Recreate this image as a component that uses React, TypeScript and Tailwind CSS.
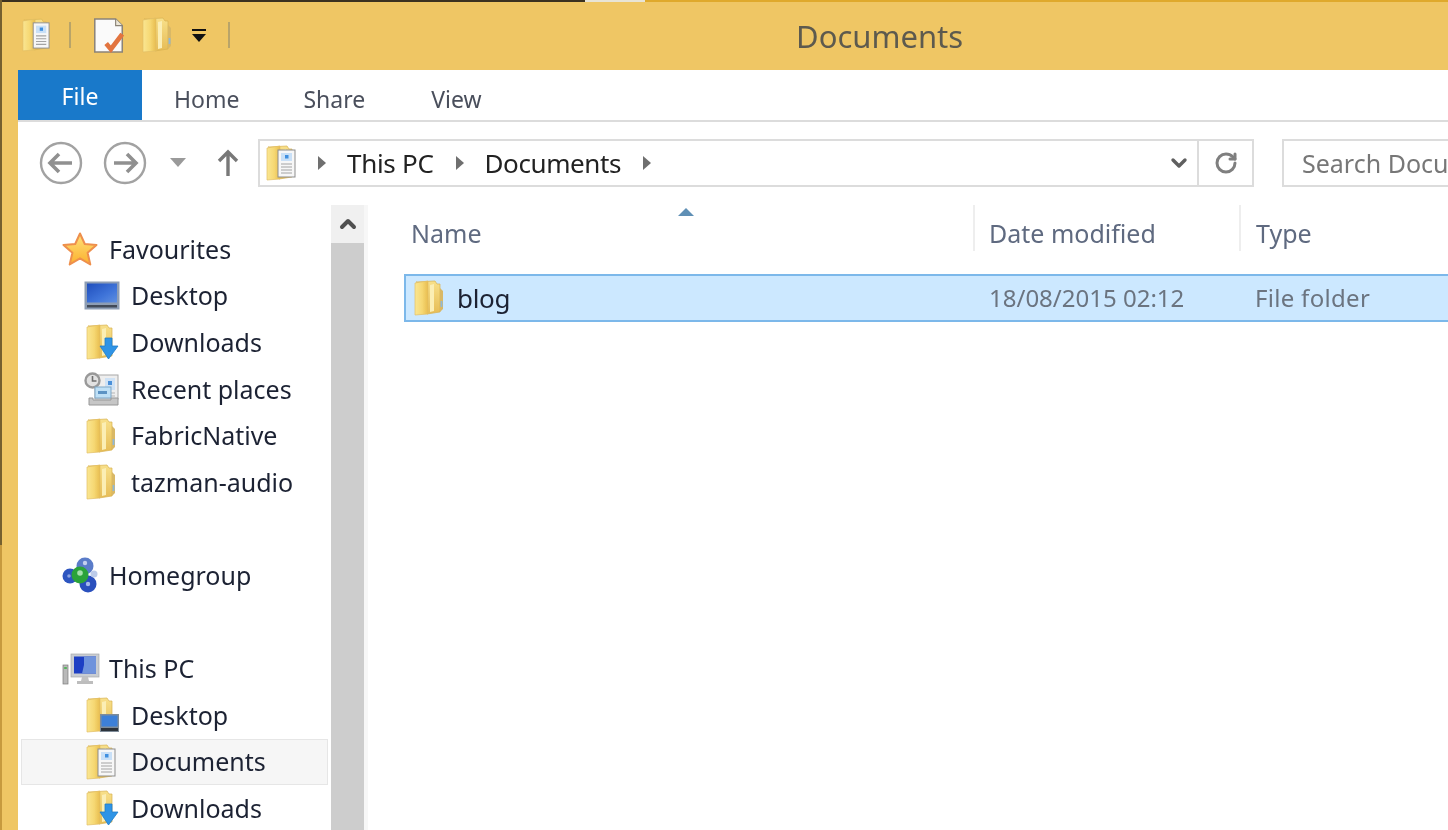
import { ChevronUp, ChevronDown, RotateCw } from 'lucide-react';

type IconKind = 'folder' | 'docs' | 'downloads' | 'desktopFolder' | 'desktop' | 'recent';

function FolderBase() {
  return (
    <>
      <defs>
        <linearGradient id="fold-front" x1="0" y1="0" x2="1" y2="0">
          <stop offset="0" stopColor="#fae692" />
          <stop offset="0.55" stopColor="#f6d873" />
          <stop offset="1" stopColor="#e8bd4f" />
        </linearGradient>
        <linearGradient id="fold-back" x1="0" y1="0" x2="0" y2="1">
          <stop offset="0" stopColor="#f8e08a" />
          <stop offset="1" stopColor="#e6bc55" />
        </linearGradient>
      </defs>
      <path d="M2 2 L21 1 L23 4 L26 4 L26 32 L13 34 L13 6 Z" fill="url(#fold-back)" stroke="#d9b250" strokeWidth="0.7" />
      <path d="M16 5 L20 4 L20 31 L16 32 Z" fill="#fbeeb4" />
      <path d="M1 3 L14 1 L14 34 L1 35 Z" fill="url(#fold-front)" stroke="#e2bf66" strokeWidth="0.7" />
    </>
  );
}

function Folder({ className = 'ml-[2px] w-[30px] h-[36px]' }: { className?: string }) {
  return (
    <svg viewBox="0 0 30 36" className={className}>
      <FolderBase />
      <path d="M26 8 L29 11 L29 29 L26 32 Z" fill="#d9b866" />
      <rect x="26.6" y="21" width="1.8" height="6" fill="#8fb8d6" />
    </svg>
  );
}

function DocsFolder({ className = 'ml-[2px] w-[30px] h-[36px]' }: { className?: string }) {
  return (
    <svg viewBox="0 0 30 36" className={className}>
      <FolderBase />
      <rect x="12" y="5" width="17" height="27" fill="#f7f7f7" stroke="#8d8d8d" strokeWidth="1" />
      <rect x="15" y="8" width="11" height="8" fill="#c9e0f7" />
      <rect x="19" y="10" width="3.5" height="3.5" fill="#3f8fe0" />
      <path d="M15 19h11M15 22h11M15 25h11M15 28h11" stroke="#a3a3a3" strokeWidth="1.2" />
    </svg>
  );
}

function DownloadsFolder() {
  return (
    <svg viewBox="0 0 34 36" className="ml-[2px] h-[36px] w-[34px]">
      <FolderBase />
      <path d="M19 14 H26 V22 H32 L22.5 35 L14 22 H19 Z" fill="#2f94e6" stroke="#1f7cc9" strokeWidth="0.8" />
    </svg>
  );
}

function DesktopFolder() {
  return (
    <svg viewBox="0 0 34 36" className="ml-[2px] h-[36px] w-[34px]">
      <FolderBase />
      <rect x="14" y="17" width="19" height="18" fill="#7f8c99" />
      <rect x="15.5" y="18.5" width="16" height="11" fill="#3d80d8" />
      <rect x="15" y="31" width="17" height="3" fill="#2c333b" />
    </svg>
  );
}

function Monitor() {
  return (
    <svg viewBox="0 0 36 30" className="h-[30px] w-[36px]">
      <defs>
        <linearGradient id="screen-blue" x1="0" y1="0" x2="1" y2="1">
          <stop offset="0" stopColor="#1f4ebd" />
          <stop offset="0.6" stopColor="#3f74d9" />
          <stop offset="1" stopColor="#5f8fe0" />
        </linearGradient>
      </defs>
      <rect x="0.5" y="0.5" width="35" height="28" fill="#8d9db4" />
      <rect x="3" y="2.5" width="30" height="19" fill="url(#screen-blue)" />
      <rect x="3" y="24" width="30" height="2.5" fill="#414a58" />
    </svg>
  );
}

function RecentIcon() {
  return (
    <svg viewBox="0 0 36 34" className="h-[34px] w-[36px]">
      <rect x="11" y="3" width="23" height="24" fill="#eeeeee" stroke="#a8a8a8" />
      <rect x="21" y="6" width="10" height="12" fill="#cfe2f5" />
      <rect x="24" y="9" width="4" height="4" fill="#4a90d9" />
      <path d="M20 21h11M20 24h11" stroke="#b5b5b5" />
      <circle cx="8.5" cy="8.5" r="7" fill="#e2e2e2" stroke="#999999" strokeWidth="2.4" />
      <path d="M8.5 4v5h4" stroke="#6f6f6f" strokeWidth="1.6" fill="none" />
      <rect x="11" y="15" width="16" height="11" fill="#bfe0f6" stroke="#7fa7c7" />
      <rect x="14" y="19" width="9" height="3" fill="#5c93c4" />
      <path d="M5 26 H9 V28 H27 V26 H34 V33 H5 Z" fill="#c6c6c6" stroke="#989898" />
    </svg>
  );
}

function SidebarIcon({ kind }: { kind: IconKind }) {
  if (kind === 'folder') return <Folder />;
  if (kind === 'docs') return <DocsFolder />;
  if (kind === 'downloads') return <DownloadsFolder />;
  if (kind === 'desktopFolder') return <DesktopFolder />;
  if (kind === 'desktop') return <Monitor />;
  return <RecentIcon />;
}

function Star() {
  return (
    <svg viewBox="0 0 36 34" className="h-[34px] w-[36px]">
      <defs>
        <linearGradient id="star-fill" x1="0" y1="0" x2="0" y2="1">
          <stop offset="0" stopColor="#ffe27a" />
          <stop offset="1" stopColor="#fbb02d" />
        </linearGradient>
      </defs>
      <path d="M18 1.5 L22.8 12 L34.5 13 L25.6 20.8 L28.3 32.5 L18 26.3 L7.7 32.5 L10.4 20.8 L1.5 13 L13.2 12 Z" fill="url(#star-fill)" stroke="#ee8f4c" strokeWidth="2" strokeLinejoin="round" />
    </svg>
  );
}

function HomegroupIcon() {
  return (
    <svg viewBox="0 0 36 36" className="h-[36px] w-[36px]">
      <circle cx="23" cy="9" r="8.5" fill="#5a7cc9" />
      <circle cx="8" cy="19" r="7.5" fill="#2d55c0" />
      <circle cx="26" cy="27" r="8.5" fill="#2a50bd" />
      <circle cx="32" cy="17" r="3.5" fill="#bccbe9" />
      <circle cx="18" cy="18" r="8.5" fill="#2ba33a" />
      <circle cx="18" cy="16" r="2.8" fill="#a6e0ac" />
      <circle cx="26" cy="27" r="2.2" fill="#a5b9ea" />
      <circle cx="23" cy="6" r="2.2" fill="#c3d0ee" />
      <circle cx="7" cy="19" r="1.8" fill="#8aa3e2" />
    </svg>
  );
}

function PcIcon() {
  return (
    <svg viewBox="0 0 38 32" className="h-[32px] w-[38px]">
      <rect x="1" y="12" width="5" height="19" fill="#b9b9b9" stroke="#7c7c7c" strokeWidth="0.7" />
      <rect x="2.2" y="14" width="2.6" height="2" fill="#55b35c" />
      <rect x="9" y="1" width="28" height="23" fill="#c9cdd2" stroke="#a6a9ad" strokeWidth="0.7" />
      <rect x="12" y="3.5" width="22" height="17" fill="#1d3fc4" />
      <path d="M22 3.5 H34 V20.5 H20 L22 12 Z" fill="#6f93dc" />
      <path d="M20 24h6l1 4h-8z" fill="#c2c2c2" />
      <rect x="15" y="28" width="16" height="3" fill="#bdbdbd" />
    </svg>
  );
}

function TreeRow({ label, kind, selected }: { label: string; kind: IconKind; selected?: boolean }) {
  return (
    <div
      className={`flex h-[46.6px] items-center ${selected ? 'ml-[3px] mr-[3px] border border-[#e6e6e6] bg-[#f6f6f6] pl-[62px]' : 'pl-[66px]'}`}
    >
      <div className="flex w-[47px] shrink-0 items-center">
        <SidebarIcon kind={kind} />
      </div>
      <span className="text-[25px] leading-none text-[#1c2233]">{label}</span>
    </div>
  );
}

function TreeHead({ label, icon }: { label: string; icon: React.ReactNode }) {
  return (
    <div className="flex h-[46.6px] items-center pl-[44px]">
      <div className="flex w-[47px] shrink-0 items-center">{icon}</div>
      <span className="text-[25px] leading-none text-[#1c2233]">{label}</span>
    </div>
  );
}

function Caret() {
  return (
    <svg viewBox="0 0 10 16" className="h-[16px] w-[10px]">
      <path d="M1 1 L9 8 L1 15 Z" fill="#6f6f6f" />
    </svg>
  );
}

function NavCircle({ dir }: { dir: 'left' | 'right' }) {
  return (
    <svg viewBox="0 0 44 44" className="h-[44px] w-[44px] shrink-0">
      <circle cx="22" cy="22" r="20" fill="none" stroke="#a2a2a2" strokeWidth="2.4" />
      {dir === 'left' ? (
        <path d="M33 22 H12 M20 13 L11 22 L20 31" fill="none" stroke="#909090" strokeWidth="3.6" />
      ) : (
        <path d="M11 22 H32 M24 13 L33 22 L24 31" fill="none" stroke="#909090" strokeWidth="3.6" />
      )}
    </svg>
  );
}

export default function App() {
  return (
    <div className="flex h-[830px] w-[1448px] overflow-hidden bg-[#efc664] font-['Noto_Sans',sans-serif] blur-[0.6px]">
      {/* Left edge of the window */}
      <div className="flex w-[2px] shrink-0 flex-col">
        <div className="h-[545px] bg-[#75602f]" />
        <div className="flex-1 bg-[#c79a3e]" />
      </div>

      <div className="flex min-w-0 flex-1 flex-col">
        {/* Top edge */}
        <div className="flex h-[2px] shrink-0">
          <div className="w-[583px] bg-[#3b3120]" />
          <div className="w-[60px] bg-[#e8e4d6]" />
          <div className="flex-1 bg-[#dfa92c]" />
        </div>

        {/* Title bar */}
        <div className="flex h-[68px] shrink-0 items-center pb-[3px]">
          <div className="ml-[20px] flex w-[28px] justify-center">
            <DocsFolder className="h-[34px] w-[30px]" />
          </div>
          <div className="ml-[19px] h-[26px] w-[2px] bg-[#b9a469]" />
          <svg viewBox="0 0 32 38" className="ml-[22px] mt-[2px] h-[36px] w-[32px]">
            <path d="M1 1 H23 L30 8 V36 H1 Z" fill="#fafafa" stroke="#8a8378" strokeWidth="1.6" />
            <path d="M23 1 V8 H30" fill="#ece7d8" stroke="#8a8378" strokeWidth="1.2" />
            <path d="M13 27 L18 33 L30 17" fill="none" stroke="#e2743f" strokeWidth="5" />
          </svg>
          <div className="ml-[17px]">
            <Folder className="h-[36px] w-[30px]" />
          </div>
          <svg viewBox="0 0 16 14" className="ml-[19px] mt-[2px] h-[14px] w-[16px]">
            <rect x="1" y="0" width="14" height="2" fill="#111111" />
            <path d="M1 5 H15 L8 13 Z" fill="#111111" />
          </svg>
          <div className="ml-[21px] h-[26px] w-[2px] bg-[#b9a469]" />
          <div className="ml-[566px] mt-[3px] text-[31px] leading-none text-[#5d5a4e]">Documents</div>
        </div>

        {/* Window body */}
        <div className="ml-[16px] flex min-h-0 flex-1 flex-col bg-white">
          {/* Tabs */}
          <div className="flex h-[52px] shrink-0 border-b-2 border-[#dcdcdc] text-[23px] text-[#4a4f5c]">
            <div className="flex h-[50px] w-[124px] items-center justify-center bg-[#1979ca] pt-[3px] text-white">File</div>
            <div className="ml-[32px] flex items-center pt-[8px]">Home</div>
            <div className="ml-[64px] flex items-center pt-[8px]">Share</div>
            <div className="ml-[66px] flex items-center pt-[8px]">View</div>
          </div>

          {/* Address toolbar */}
          <div className="flex h-[83px] shrink-0 items-start pt-[17px]">
            <div className="ml-[21px] mt-[2px] flex items-center">
              <NavCircle dir="left" />
              <div className="ml-[20px]">
                <NavCircle dir="right" />
              </div>
              <svg viewBox="0 0 16 10" className="ml-[23px] h-[10px] w-[16px]">
                <path d="M0 0 H16 L8 9 Z" fill="#9a9a9a" />
              </svg>
              <svg viewBox="0 0 22 28" className="ml-[31px] h-[28px] w-[22px]">
                <path d="M11 27 V3 M2 12 L11 3 L20 12" fill="none" stroke="#787878" strokeWidth="3.4" />
              </svg>
            </div>
            <div className="ml-[19px] flex h-[48px] w-[996px] shrink-0 items-center border-2 border-[#dcdcdc]">
              <div className="ml-[6px]">
                <DocsFolder className="h-[36px] w-[30px]" />
              </div>
              <div className="ml-[21px]">
                <Caret />
              </div>
              <span className="ml-[20px] text-[26px] leading-none tracking-[-0.3px] text-[#222222]">This PC</span>
              <div className="ml-[21px]">
                <Caret />
              </div>
              <span className="ml-[20px] text-[26px] leading-none tracking-[-0.4px] text-[#222222]">Documents</span>
              <div className="ml-[21px]">
                <Caret />
              </div>
              <div className="flex-1" />
              <ChevronDown className="mr-[6px] h-[24px] w-[24px] text-[#5f5f5f]" strokeWidth={3.4} />
              <div className="flex h-full w-[55px] items-center justify-center border-l-2 border-[#dcdcdc]">
                <RotateCw className="h-[24px] w-[24px] text-[#7f7f7f]" strokeWidth={3} />
              </div>
            </div>
            <div className="ml-[28px] flex h-[48px] w-[300px] shrink-0 items-center border-2 border-[#dcdcdc] pl-[18px] text-[25px] leading-none whitespace-nowrap text-[#777777]">
              Search Documents
            </div>
          </div>

          <div className="flex min-h-0 flex-1">
            {/* Navigation pane */}
            <div className="w-[313px] shrink-0 pt-[21px]">
              <TreeHead label="Favourites" icon={<Star />} />
              <TreeRow label="Desktop" kind="desktop" />
              <TreeRow label="Downloads" kind="downloads" />
              <TreeRow label="Recent places" kind="recent" />
              <TreeRow label="FabricNative" kind="folder" />
              <TreeRow label="tazman-audio" kind="folder" />
              <div className="h-[46.6px]" />
              <TreeHead label="Homegroup" icon={<HomegroupIcon />} />
              <div className="h-[46.6px]" />
              <TreeHead label="This PC" icon={<PcIcon />} />
              <TreeRow label="Desktop" kind="desktopFolder" />
              <TreeRow label="Documents" kind="docs" selected />
              <TreeRow label="Downloads" kind="downloads" />
            </div>

            {/* Scrollbar */}
            <div className="flex w-[33px] shrink-0 flex-col bg-[#cdcdcd]">
              <div className="flex h-[38px] items-center justify-center bg-[#f0f0f0]">
                <ChevronUp className="h-[24px] w-[24px] text-[#505050]" strokeWidth={4} />
              </div>
            </div>

            {/* File list */}
            <div className="relative min-w-0 flex-1 border-l-4 border-[#f7f7f7]">
              <svg viewBox="0 0 16 8" className="absolute left-[310px] top-[3px] h-[8px] w-[16px]">
                <path d="M0 8 L8 0 L16 8 Z" fill="#5f8fb5" />
              </svg>
              <div className="flex h-[69px] text-[25px] text-[#5f6a80]">
                <div className="flex h-[46px] w-[607px] shrink-0 items-center border-r-2 border-[#eeeeee] pl-[43px] pt-[12px]">Name</div>
                <div className="flex h-[46px] w-[266px] shrink-0 items-center border-r-2 border-[#eeeeee] pl-[14px] pt-[12px]">Date modified</div>
                <div className="flex h-[46px] items-center pl-[15px] pt-[12px]">Type</div>
              </div>
              <div className="ml-[36px] flex h-[48px] items-center border-2 border-r-0 border-[#7cb8ea] bg-[#cce8ff]">
                <div className="ml-[8px] flex w-[43px] shrink-0">
                  <Folder className="h-[36px] w-[30px]" />
                </div>
                <span className="w-[532px] shrink-0 text-[26px] leading-none tracking-[-0.3px] text-[#1c2233]">blog</span>
                <span className="w-[266px] shrink-0 text-[24px] leading-none text-[#6b7480]">18/08/2015 02:12</span>
                <span className="text-[24px] leading-none tracking-[0.3px] text-[#6b7480]">File folder</span>
              </div>
            </div>
          </div>
        </div>
      </div>
    </div>
  );
}
